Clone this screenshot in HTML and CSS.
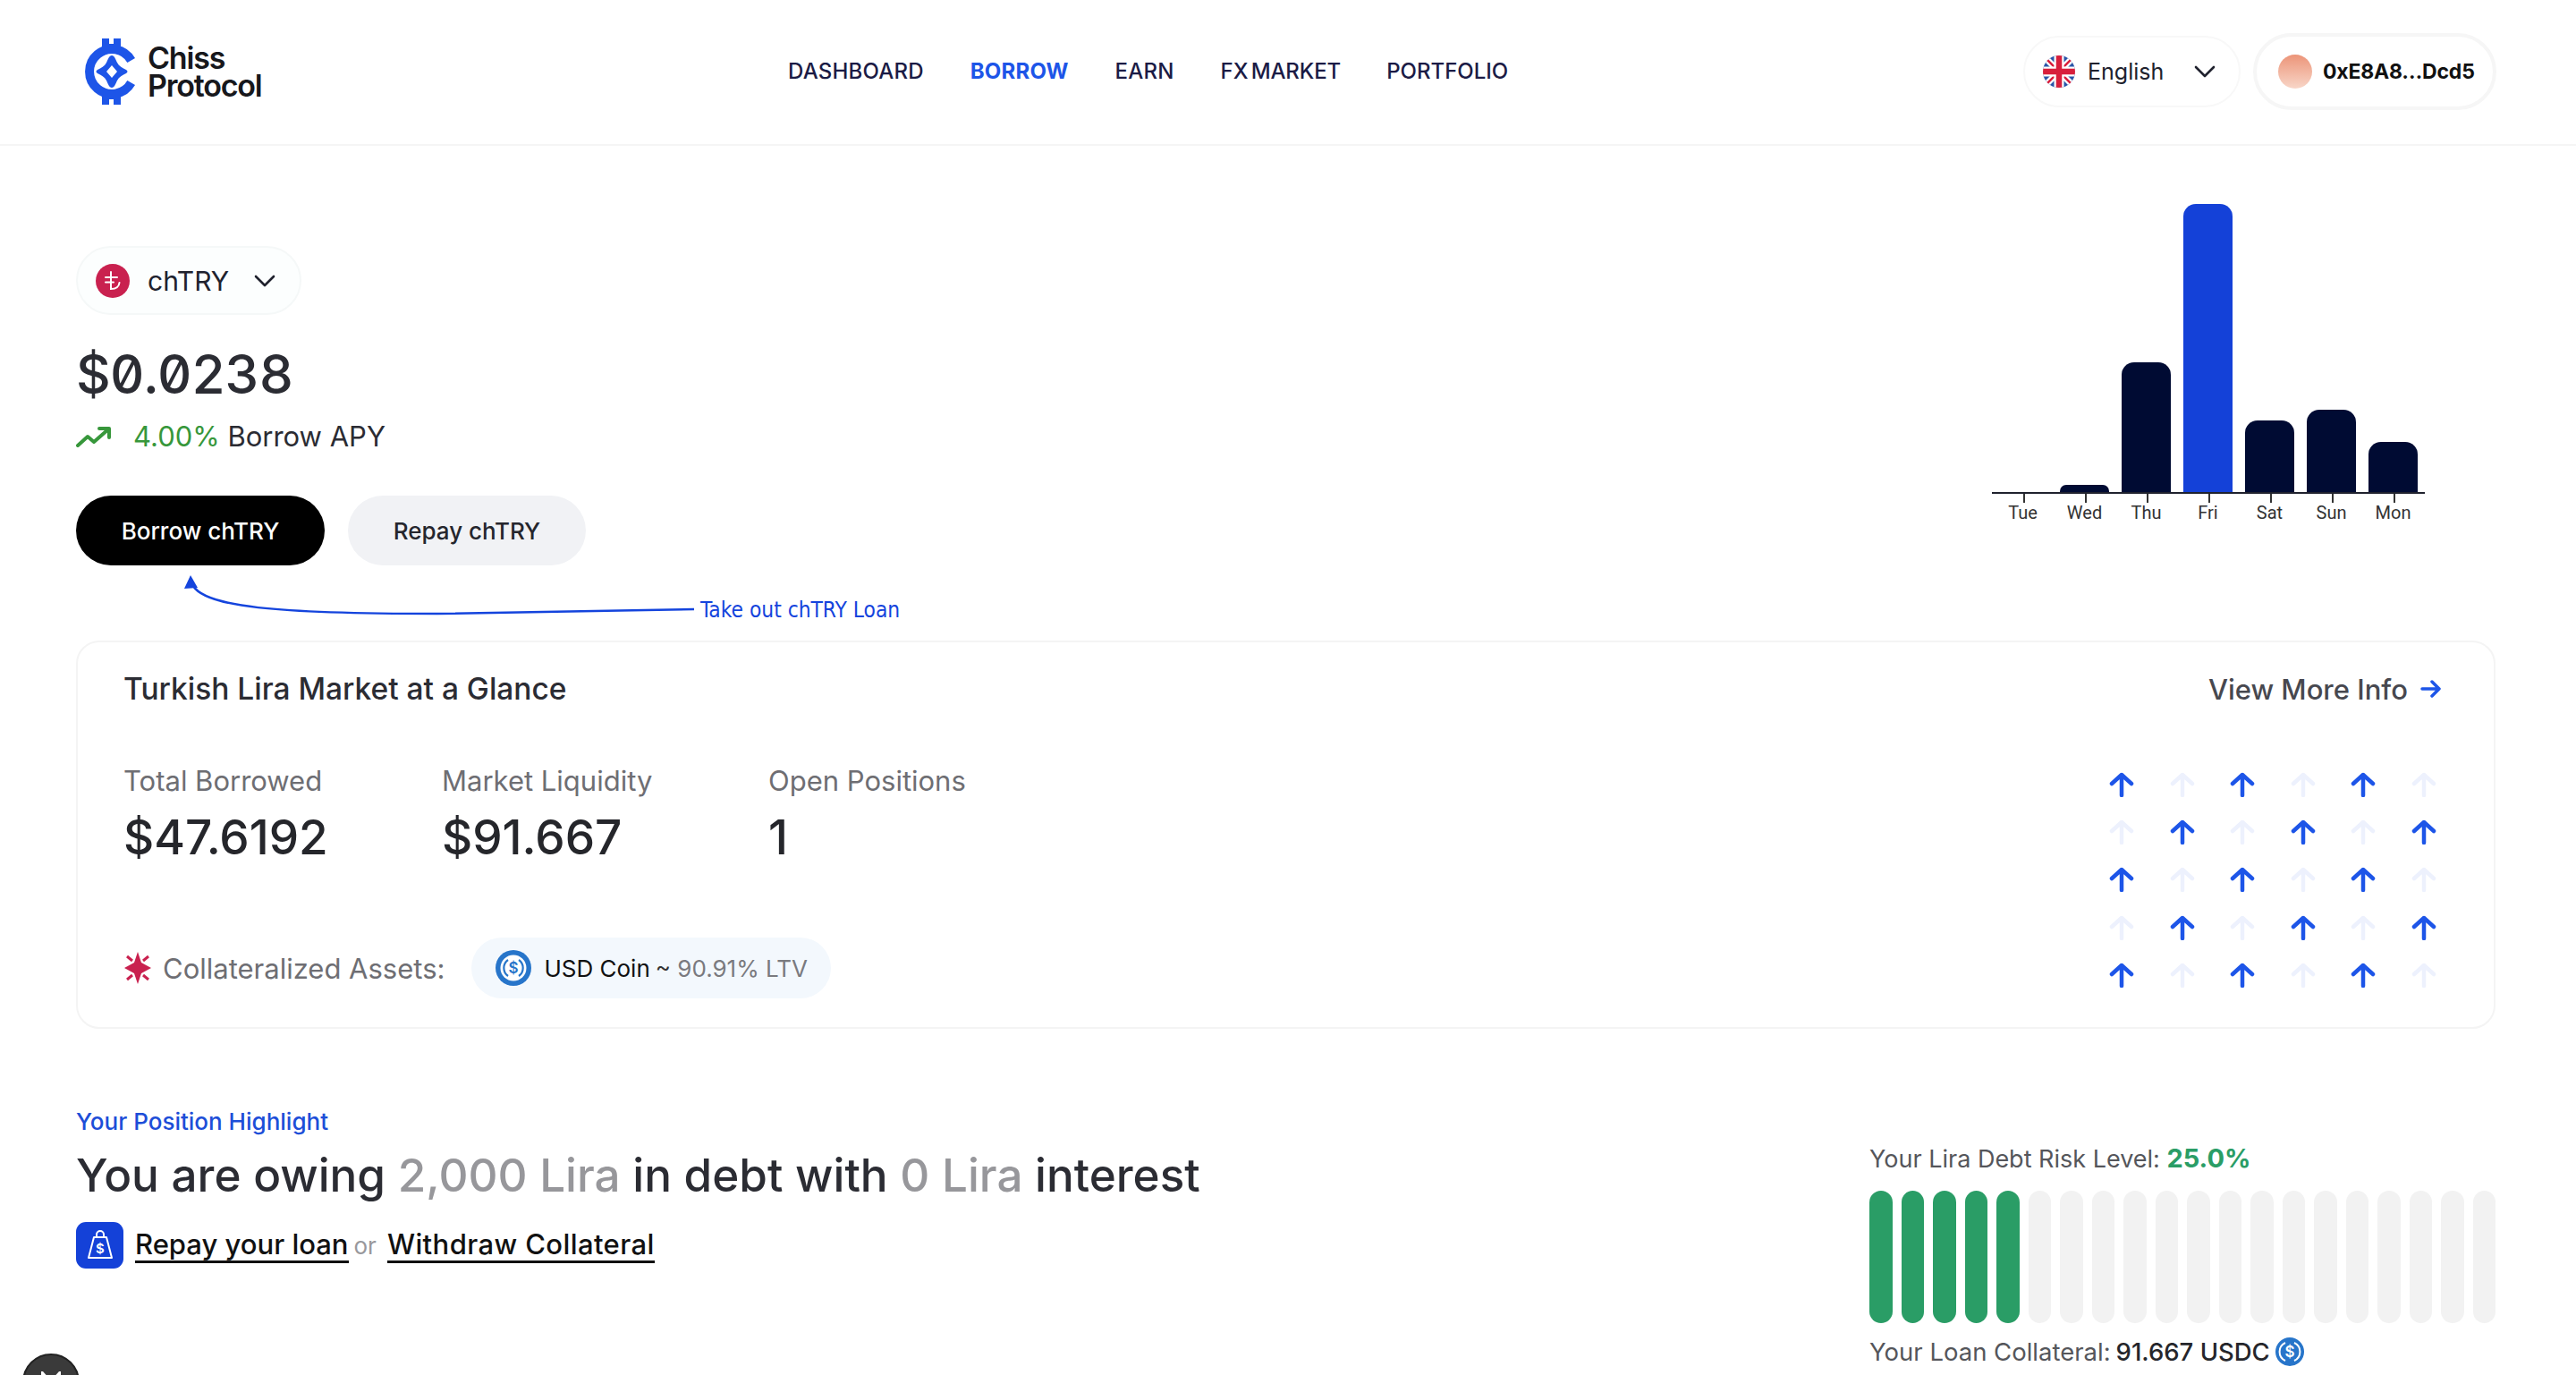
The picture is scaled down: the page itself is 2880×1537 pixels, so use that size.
FILE: index.html
```html
<!DOCTYPE html>
<html lang="en">
<head>
  <meta charset="UTF-8" />
  <meta name="viewport" content="width=device-width, initial-scale=1.0"/>
  <title>Chiss Protocol - Borrow</title>
  <link rel="stylesheet" href="styles.css">
</head>
<body>

  <header class="topbar">
    <a class="logo" href="#">
      <svg class="logo-mark" viewBox="0 0 58 74" width="58" height="74">
        <path d="M51.700 24.500A25 25 0 1 0 51.700 49.500" fill="none" stroke="#1d55e8" stroke-width="10"/>
        <path d="M19 0h8v6h5V0h8v14H19zM19 74h8v-6h5v6h8V60H19z" fill="#1d55e8"/>
        <path d="M30 19c3 0 4 4 6 8s6 6 10 8c2 1 2 3 0 4-4 2-8 4-10 8s-3 8-6 8-4-4-6-8-6-6-10-8c-2-1-2-3 0-4 4-2 8-4 10-8s3-8 6-8z" fill="#1d55e8"/>
        <path d="M30 30l6 7-6 7-6-7z" fill="#fff"/>
      </svg>
      <span class="logo-text"><span>Chiss</span><span>Protocol</span></span>
    </a>

    <nav class="mainnav">
      <a href="#">DASHBOARD</a>
      <a href="#" class="active">BORROW</a>
      <a href="#">EARN</a>
      <a href="#" class="fx">FX MARKET</a>
      <a href="#" class="last">PORTFOLIO</a>
    </nav>

    <div class="topbar-right">
      <button class="lang-btn">
        <svg class="flag" viewBox="0 0 36 36" width="36" height="36">
          <defs><clipPath id="flagclip"><circle cx="18" cy="18" r="18"/></clipPath></defs>
          <g clip-path="url(#flagclip)">
            <rect width="36" height="36" fill="#2a55a8"/>
            <path d="M0 0l36 36M36 0L0 36" stroke="#fff" stroke-width="7"/>
            <path d="M0 0l36 36M36 0L0 36" stroke="#d81f3c" stroke-width="2.500"/>
            <path d="M18 0v36M0 18h36" stroke="#fff" stroke-width="11"/>
            <path d="M18 0v36M0 18h36" stroke="#d81f3c" stroke-width="6.500"/>
          </g>
        </svg>
        <span>English</span>
        <svg class="chev" viewBox="0 0 24 14" width="24" height="14"><path d="M2 2l10 10L22 2" fill="none" stroke="#20222e" stroke-width="2.600" stroke-linecap="round" stroke-linejoin="round"/></svg>
      </button>
      <button class="wallet-btn">
        <span class="avatar"></span>
        <span>0xE8A8…Dcd5</span>
      </button>
    </div>
  </header>

  <main class="page">
    <section class="hero">
      <div class="hero-left">
        <button class="token-btn">
          <svg viewBox="0 0 38 38" width="38" height="38">
            <circle cx="19" cy="19" r="19" fill="#c9214f"/>
            <path d="M17 9v19c5 0 9-2 9.500-7M11 15h13M11 20.500h9" fill="none" stroke="#fff" stroke-width="2" stroke-linecap="round"/>
          </svg>
          <span>chTRY</span>
          <svg class="chev" viewBox="0 0 24 14" width="24" height="14"><path d="M2 2l10 10L22 2" fill="none" stroke="#20222e" stroke-width="2.600" stroke-linecap="round" stroke-linejoin="round"/></svg>
        </button>
        <div class="price">$0.0238</div>
        <div class="apy">
          <svg viewBox="0 0 40 24" width="40" height="24"><path d="M2 22l11-10 7 6L36 4M26 3h11v10" fill="none" stroke="#37973b" stroke-width="4" stroke-linecap="round" stroke-linejoin="round"/></svg>
          <span class="apy-text"><span class="green">4.00%</span> Borrow APY</span>
        </div>
        <div class="actions">
          <button class="btn btn-dark">Borrow chTRY</button>
          <button class="btn btn-light">Repay chTRY</button>
        </div>
        <div class="hint">
          <svg class="hint-arrow" viewBox="0 0 700 60" width="700" height="60">
            <path d="M131 12C145 35 220 43 404 43L691 38" fill="none" stroke="#1444dd" stroke-width="2.500"/>
            <path d="M128 0l-7 15 15-1z" fill="#1444dd"/>
          </svg>
          <span class="hint-text">Take out chTRY Loan</span>
        </div>
      </div>

      <div class="chart">
        <div class="bars">
          <div class="bar-col"><div class="bar" style="height:0"></div></div>
          <div class="bar-col"><div class="bar bar-small" style="height:8px"></div></div>
          <div class="bar-col"><div class="bar" style="height:145px"></div></div>
          <div class="bar-col"><div class="bar bar-top" style="height:322px"></div></div>
          <div class="bar-col"><div class="bar" style="height:80px"></div></div>
          <div class="bar-col"><div class="bar" style="height:92px"></div></div>
          <div class="bar-col"><div class="bar" style="height:56px"></div></div>
        </div>
        <div class="axis">
          <span>Tue</span><span>Wed</span><span>Thu</span><span>Fri</span><span>Sat</span><span>Sun</span><span>Mon</span>
        </div>
      </div>
    </section>

    <section class="card">
      <div class="card-head">
        <h2>Turkish Lira Market at a Glance</h2>
        <a href="#" class="more">View More Info
          <svg viewBox="0 0 24 20" width="24" height="20"><path d="M2 10h19M13 2l8 8-8 8" fill="none" stroke="#1d55e8" stroke-width="3.500" stroke-linecap="round" stroke-linejoin="round"/></svg>
        </a>
      </div>

      <div class="card-body">
        <div class="card-info">
          <div class="stats">
            <div class="stat stat-a"><div class="stat-label">Total Borrowed</div><div class="stat-value">$47.6192</div></div>
            <div class="stat stat-b"><div class="stat-label">Market Liquidity</div><div class="stat-value">$91.667</div></div>
            <div class="stat"><div class="stat-label">Open Positions</div><div class="stat-value">1</div></div>
          </div>
          <div class="collateral">
            <svg viewBox="0 0 32 36" width="32" height="36">
              <path d="M16 0l4 12 11 6-11 6-4 12-4-12L1 18l11-6z" fill="#c9214f"/>
              <path d="M4 5l6 5M28 5l-6 5M4 31l6-5M28 31l-6-5" stroke="#c9214f" stroke-width="3"/>
            </svg>
            <span class="collateral-label">Collateralized Assets:</span>
            <span class="asset-pill">
              <svg viewBox="0 0 40 40" width="40" height="40">
                <circle cx="20" cy="20" r="20" fill="#2775ca"/>
                <circle cx="20" cy="20" r="14.500" fill="#fff"/>
                <path d="M14 11a11 11 0 0 0 0 18M26 11a11 11 0 0 1 0 18" fill="none" stroke="#2775ca" stroke-width="2.200"/>
                <text x="20" y="26" text-anchor="middle" class="usdc-sign">$</text>
              </svg>
              <span class="asset-name">USD Coin</span>
              <span class="asset-ltv"><span class="tilde">~</span> 90.91% LTV</span>
            </span>
          </div>
        </div>

        <div class="arrows" id="arrows"></div>
      </div>
    </section>

    <section class="position">
      <div class="position-left">
        <div class="eyebrow">Your Position Highlight</div>
        <h1>You are owing <span class="muted">2,000 Lira</span> in debt with <span class="muted">0 Lira</span> interest</h1>
        <div class="links">
          <span class="bag">
            <svg viewBox="0 0 32 36" width="32" height="36">
              <path d="M9 9h14l6 23H3z" fill="none" stroke="#fff" stroke-width="2" stroke-linejoin="round"/>
              <path d="M12 9V6a4 4 0 0 1 8 0v3" fill="none" stroke="#fff" stroke-width="2"/>
              <text x="16" y="27" text-anchor="middle" class="bag-sign">$</text>
            </svg>
          </span>
          <a href="#">Repay your loan</a>
          <span class="or">or</span>
          <a href="#" class="withdraw">Withdraw Collateral</a>
        </div>
      </div>

      <div class="risk">
        <div class="risk-title">Your Lira Debt Risk Level: <strong>25.0%</strong></div>
        <div class="risk-bars" id="riskBars"></div>
        <div class="risk-foot">Your Loan Collateral: <span class="dark">91.667 USDC</span>
          <svg viewBox="0 0 32 32" width="32" height="32">
            <circle cx="16" cy="16" r="16" fill="#2775ca"/>
            <path d="M11 6a11 11 0 0 0 0 20M21 6a11 11 0 0 1 0 20" fill="none" stroke="#fff" stroke-width="2"/>
            <text x="16" y="22" text-anchor="middle" class="usdc-sign usdc-white">$</text>
          </svg>
        </div>
      </div>
    </section>
  </main>

  <button class="float-btn">
    <svg viewBox="0 0 24 20" width="24" height="20"><path d="M3 18V3l9 10 9-10v15" fill="none" stroke="#fff" stroke-width="4"/></svg>
  </button>

  <script>
  const arrowSvg = '<svg viewBox="0 0 28 28" width="28" height="28"><path d="M14 26V3M3 13L14 3l11 10" fill="none" stroke="currentColor" stroke-width="4.500" stroke-linecap="round" stroke-linejoin="round"/></svg>';
  const arrows = document.getElementById("arrows");
  for (let i = 0; i < 30; i++) {
    const row = Math.floor(i / 6);
    const cell = document.createElement("span");
    cell.className = (i + row) % 2 === 0 ? "arrow" : "arrow arrow-faint";
    cell.innerHTML = arrowSvg;
    arrows.appendChild(cell);
  }

  const riskBars = document.getElementById("riskBars");
  for (let i = 0; i < 20; i++) {
    const bar = document.createElement("span");
    bar.className = i < 5 ? "risk-bar on" : "risk-bar";
    riskBars.appendChild(bar);
  }
  </script>

</body>
</html>
```

FILE: styles.css
```css
* {
  box-sizing: border-box;
}
html, body {
  height: 100%;
  overflow: hidden;
}
body {
  margin: 0;
  background: #fff;
  color: #2b2c33;
  font-family: Inter, "Noto Sans", sans-serif;
}
a {
  color: inherit;
  text-decoration: none;
}
button {
  font-family: inherit;
  cursor: pointer;
}

/* top bar */
.topbar {
  height: 163px;
  display: flex;
  align-items: center;
  padding: 0 89px 2px 95px;
  border-bottom: 2px solid #f5f5f5;
}
.logo {
  width: 786px;
  display: flex;
  align-items: center;
  gap: 12px;
  flex-shrink: 0;
}
.logo-text {
  font-size: 34px;
  font-weight: 600;
  letter-spacing: -1.200px;
  color: #17181c;
}
.logo-text span {
  display: block;
  line-height: 31px;
}
.mainnav {
  display: flex;
  gap: 52px;
  font-size: 24px;
  font-weight: 500;
  letter-spacing: 0.2px;
  color: #1b1b45;
}
.mainnav .active {
  color: #1d55e8;
  font-weight: 700;
}
.mainnav .fx {
  word-spacing: -3px;
  letter-spacing: -0.1px;
}
.mainnav .last {
  letter-spacing: 0;
  margin-left: -1px;
}
.topbar-right {
  margin-left: auto;
  display: flex;
  align-items: center;
  gap: 14px;
}
.lang-btn {
  width: 243px;
  height: 80px;
  display: flex;
  align-items: center;
  padding: 0 26px 0 20px;
  border: 2px solid #f8f8f8;
  border-radius: 40px;
  background: #fff;
  font-size: 25px;
  color: #20222e;
}
.lang-btn .flag {
  margin-right: 14px;
}
.lang-btn .chev {
  margin-left: auto;
}
.wallet-btn {
  width: 272px;
  height: 86px;
  display: flex;
  align-items: center;
  gap: 12px;
  padding: 0 0 0 24px;
  border: 4px solid #f6f6f6;
  border-radius: 43px;
  background: #fff;
  font-size: 23px;
  font-weight: 700;
  letter-spacing: -0.2px;
  color: #111;
}
.avatar {
  width: 38px;
  height: 38px;
  border-radius: 50%;
  background: linear-gradient(180deg, #ec9478, #f8d6c8);
}

/* main */
.page {
  padding: 0 90px 0 85px;
}
.hero {
  height: 553px;
  display: flex;
  justify-content: space-between;
}
.hero-left {
  padding-top: 112px;
}
.token-btn {
  width: 252px;
  height: 77px;
  display: flex;
  align-items: center;
  padding: 0 27px 0 20px;
  border: 2px solid #f5f8f8;
  border-radius: 39px;
  background: #fcfefe;
  font-size: 30px;
  color: #20222e;
}
.token-btn span {
  margin-left: 20px;
}
.token-btn .chev {
  margin-left: auto;
}
.price {
  margin-top: 30px;
  font-size: 60px;
  line-height: 72px;
  font-weight: 500;
  font-feature-settings: "zero", "tnum";
  letter-spacing: -1px;
  color: #2b2c33;
}
.apy {
  margin-top: 12px;
  display: flex;
  align-items: center;
  gap: 24px;
  font-size: 31px;
  line-height: 44px;
}
.green {
  color: #37973b;
}
.actions {
  margin-top: 44px;
  display: flex;
  gap: 26px;
}
.btn {
  height: 78px;
  border: none;
  border-radius: 39px;
  font-size: 26px;
  font-weight: 500;
}
.btn-dark {
  width: 278px;
  background: #000;
  color: #fff;
}
.btn-light {
  width: 266px;
  background: #f1f2f5;
  color: #25262d;
}
.hint {
  position: relative;
  height: 0;
}
.hint-arrow {
  position: absolute;
  left: 0;
  top: 11px;
}
.hint-text {
  position: absolute;
  left: 698px;
  top: 36px;
  font-family: "DejaVu Sans Condensed", "DejaVu Sans", sans-serif;
  font-size: 24.300px;
  line-height: 28px;
  white-space: nowrap;
  color: #1444dd;
}
.chart {
  width: 484px;
  margin-top: 65px;
  margin-right: 79px;
}
.bars {
  height: 324px;
  display: flex;
  align-items: flex-end;
  border-bottom: 2px solid #20222e;
}
.bar-col {
  width: 69px;
  display: flex;
  justify-content: center;
}
.bar {
  width: 55px;
  border-radius: 14px 14px 0 0;
  background: #000b33;
}
.bar-small {
  border-radius: 7px 7px 0 0;
}
.bar-top {
  background: #1441d8;
}
.axis {
  display: flex;
  font-family: Roboto, sans-serif;
  font-size: 20px;
  color: #333;
}
.axis span {
  position: relative;
  width: 69px;
  padding-top: 8px;
  text-align: center;
  line-height: 26px;
}
.axis span::before {
  content: "";
  position: absolute;
  left: 50%;
  top: 0;
  width: 2px;
  height: 10px;
  background: #333;
}

/* market card */
.card {
  height: 434px;
  padding: 31px 50px 0 51px;
  border: 2px solid #f4f4f4;
  border-radius: 26px;
}
.card-head {
  display: flex;
  justify-content: space-between;
  align-items: center;
  height: 42px;
}
.card-head h2 {
  margin: 0;
  font-size: 33.500px;
  font-weight: 500;
  color: #2b2c33;
}
.more {
  display: flex;
  align-items: center;
  gap: 14px;
  padding-right: 8px;
  font-size: 31px;
  font-weight: 500;
  color: #47484f;
}
.card-body {
  display: flex;
  justify-content: space-between;
}
.stats {
  display: flex;
  margin-top: 63px;
}
.stat-a {
  width: 356px;
}
.stat-b {
  width: 365px;
}
.stat-label {
  font-size: 31px;
  line-height: 38px;
  color: #6e6e73;
}
.stat-value {
  margin-top: 13px;
  font-size: 53px;
  line-height: 62px;
  font-weight: 500;
  color: #25262b;
}
.collateral {
  margin-top: 81px;
  display: flex;
  align-items: center;
}
.collateral-label {
  margin-left: 12px;
  font-size: 31px;
  color: #6e6e73;
}
.asset-pill {
  margin-left: 30px;
  height: 68px;
  display: flex;
  align-items: center;
  padding: 0 26px 0 27px;
  border-radius: 34px;
  background: #f3f8fd;
  font-size: 26px;
}
.asset-name {
  margin-left: 14px;
  color: #111;
}
.asset-ltv {
  margin-left: 6px;
  color: #7a7a7f;
}
.tilde {
  color: #333;
}
.usdc-sign {
  font-family: Inter, sans-serif;
  font-size: 17px;
  font-weight: 600;
  fill: #2775ca;
}
.usdc-white {
  fill: #fff;
}
.arrows {
  width: 406px;
  margin-top: 72px;
  margin-right: -26px;
  display: grid;
  grid-template-columns: repeat(6, 67.600px);
  grid-auto-rows: 53.200px;
}
.arrow {
  display: flex;
  width: 28px;
  height: 28px;
  color: #1d55e8;
}
.arrow-faint {
  color: #edf1fd;
}

/* position */
.position {
  display: flex;
  justify-content: space-between;
  padding-top: 89px;
}
.eyebrow {
  font-size: 26px;
  line-height: 30px;
  font-weight: 500;
  color: #1d4ed8;
}
.position h1 {
  margin: 12px 0 0;
  font-size: 51.200px;
  line-height: 64px;
  font-weight: 500;
  color: #2b2c33;
}
.muted {
  color: #97979b;
}
.links {
  margin-top: 21px;
  display: flex;
  align-items: center;
  font-size: 31px;
  font-weight: 500;
  color: #111;
}
.bag {
  width: 53px;
  height: 52px;
  margin-right: 13px;
  display: flex;
  align-items: center;
  justify-content: center;
  border-radius: 11px;
  background: #1441d8;
}
.bag-sign {
  font-family: Inter, sans-serif;
  font-size: 15px;
  font-weight: 600;
  fill: #fff;
}
.links a {
  border-bottom: 3px solid #111;
  line-height: 36px;
}
.links .withdraw {
  letter-spacing: 0.4px;
}
.or {
  margin: 0 12px 0 6px;
  font-size: 26px;
  font-weight: 400;
  color: #98989c;
}
.risk {
  width: 700px;
  padding-top: 38px;
}
.risk-title {
  font-size: 27px;
  line-height: 36px;
  color: #55565b;
}
.risk-title strong {
  font-size: 29px;
  font-weight: 700;
  color: #2a9d66;
}
.risk-bars {
  margin-top: 17px;
  display: grid;
  grid-template-columns: repeat(20, 1fr);
  gap: 10px;
}
.risk-bar {
  height: 148px;
  border-radius: 13px;
  background: #f2f2f2;
}
.risk-bar.on {
  background: #2a9d66;
}
.risk-foot {
  margin-top: 14px;
  display: flex;
  align-items: center;
  gap: 6px;
  font-size: 27.500px;
  line-height: 36px;
  color: #55565b;
}
.dark {
  color: #25262b;
  font-weight: 500;
}

.float-btn {
  position: fixed;
  left: 25px;
  top: 1513px;
  width: 64px;
  height: 64px;
  padding: 18px 0 0;
  border: 2px solid #222;
  border-radius: 50%;
  background: #3a3a3a;
  display: flex;
  justify-content: center;
  align-items: flex-start;
}
```
